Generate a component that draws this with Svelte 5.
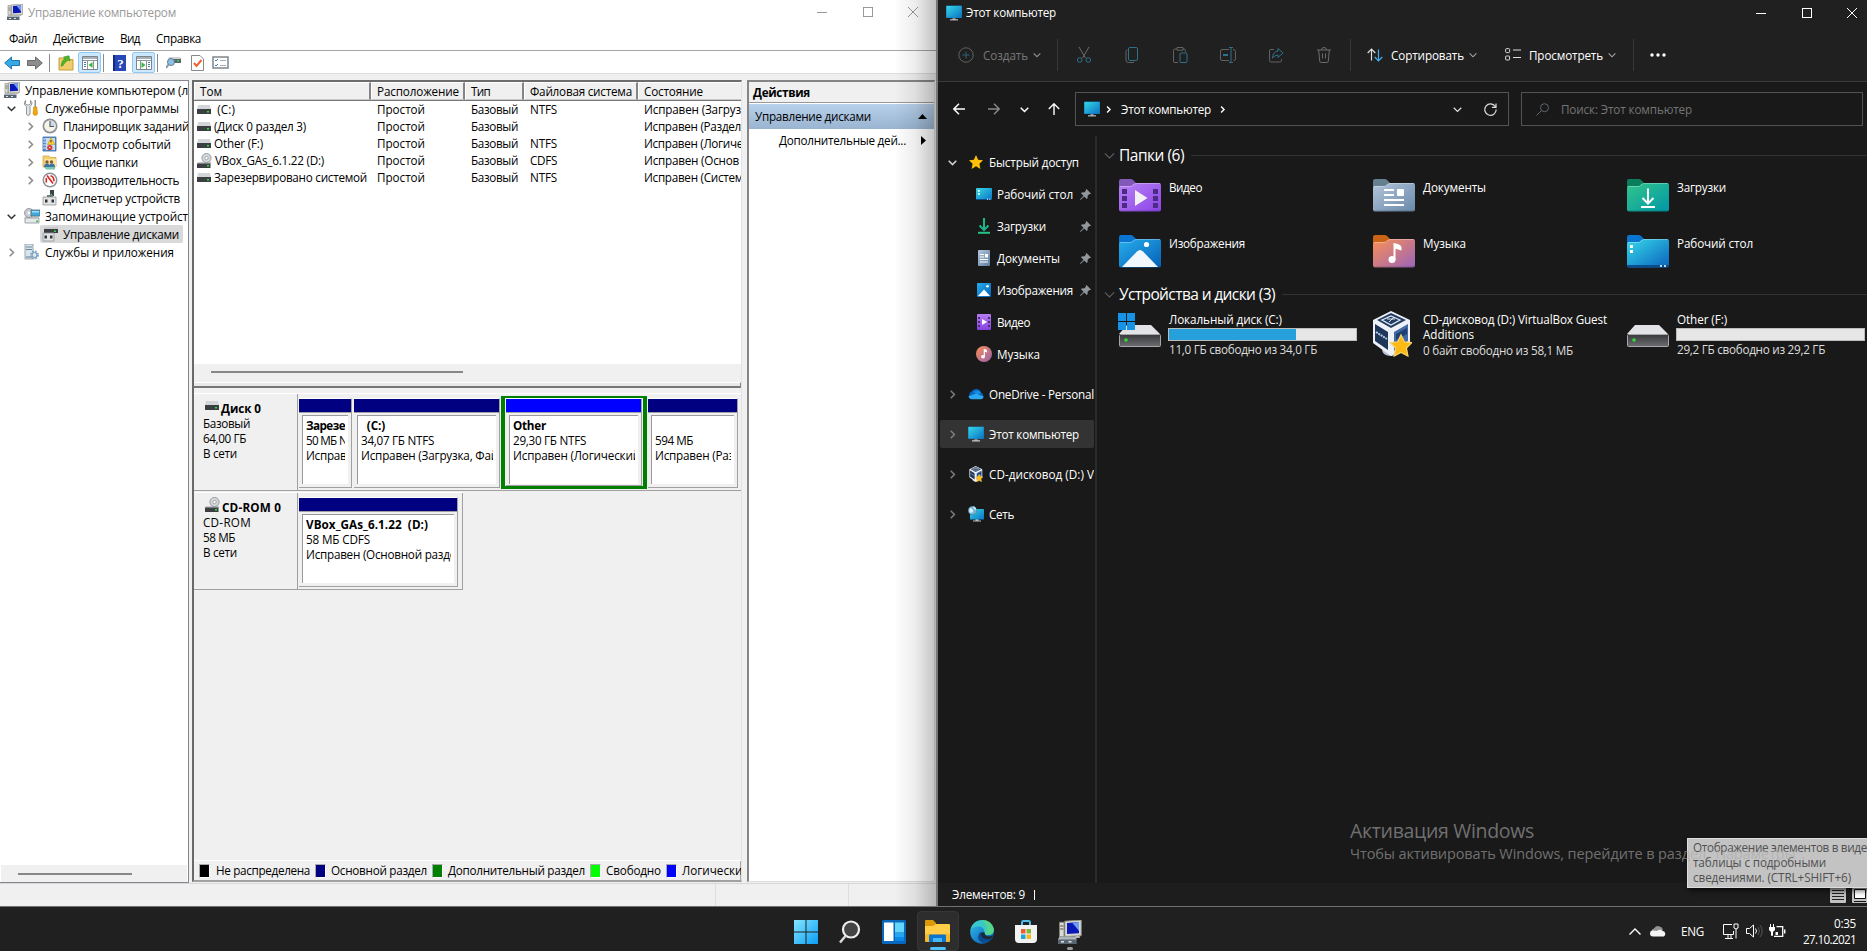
<script>
  // Spreads or tightens the letters so a label takes the given width.
  function fit(node, width) {
    if (!width) return;
    const natural = node.getBoundingClientRect().width;
    const count = [...node.textContent].length;
    node.style.letterSpacing = `${((width - natural) / count).toFixed(3)}px`;
  }

  const menu = [['Файл', 28], ['Действие', 51], ['Вид', 20], ['Справка', 45]];

  const tree = [
    { text: 'Управление компьютером (л', icon: 'mmc', lvl: 0, w: 163 },
    { text: 'Служебные программы', icon: 'tools', lvl: 1, arrow: 'down', w: 134 },
    { text: 'Планировщик заданий', icon: 'clock', lvl: 2, arrow: 'right', w: 126 },
    { text: 'Просмотр событий', icon: 'events', lvl: 2, arrow: 'right', w: 108 },
    { text: 'Общие папки', icon: 'shared', lvl: 2, arrow: 'right', w: 75 },
    { text: 'Производительность', icon: 'perf', lvl: 2, arrow: 'right', w: 116 },
    { text: 'Диспетчер устройств', icon: 'device', lvl: 2, w: 117 },
    { text: 'Запоминающие устройст', icon: 'storage', lvl: 1, arrow: 'down', w: 143 },
    { text: 'Управление дисками', icon: 'diskman', lvl: 2, sel: true, w: 116 },
    { text: 'Службы и приложения', icon: 'services', lvl: 1, arrow: 'right', w: 129 }
  ];

  const volumes = [
    ['\u00a0(C:)', 21, 'NTFS', 'Исправен (Загруз', 97],
    ['(Диск 0 раздел 3)', 92, '', 'Исправен (Раздел', 97],
    ['Other (F:)', 49, 'NTFS', 'Исправен (Логиче', 99],
    ['VBox_GAs_6.1.22 (D:)', 109, 'CDFS', 'Исправен (Основ', 95],
    ['Зарезервировано системой', 153, 'NTFS', 'Исправен (Систем', 99]
  ];

  const parts = [
    { w: 55, bar: 52, title: 'Зарезе', tw: 39, size: '50 МБ N', sw: 41, state: 'Исправен', stw: 54 },
    { w: 148, bar: 145, title: '\u00a0\u00a0(C:)', tw: 24, size: '34,07 ГБ NTFS', sw: 73, state: 'Исправен (Загрузка, Фай', stw: 137 },
    { w: 146, bar: 135, title: 'Other', tw: 33, size: '29,30 ГБ NTFS', sw: 73, state: 'Исправен (Логический', stw: 127, logical: true },
    { w: 92, bar: 89, title: '\u00a0', tw: 0, size: '594 МБ', sw: 38, state: 'Исправен (Раз', stw: 79 }
  ];

  const legend = [
    ['#000', 'Не распределена', 94],
    ['#000080', 'Основной раздел', 96],
    ['#008000', 'Дополнительный раздел', 137],
    ['#00ff00', 'Свободно', 55],
    ['#0000ff', 'Логический', 68]
  ];

  const quick = [
    ['desktop', 'Рабочий стол', 76, true],
    ['download', 'Загрузки', 49, true],
    ['docs', 'Документы', 63, true],
    ['pics', 'Изображения', 76, true],
    ['video', 'Видео', 33, false],
    ['music', 'Музыка', 43, false]
  ];

  const places = [
    ['onedrive', 'OneDrive - Personal', 105],
    ['pc', 'Этот компьютер', 90],
    ['vbox', 'CD-дисковод (D:) V', 105],
    ['net', 'Сеть', 25]
  ];

  const folders = [
    { kind: 'video', text: 'Видео', w: 33, tab: '#8259b8', a: '#b983f5', b: '#8b43e6' },
    { kind: 'docs', text: 'Документы', w: 63, tab: '#64808f', a: '#b4c6dc', b: '#6888a8' },
    { kind: 'download', text: 'Загрузки', w: 49, tab: '#0a7d5c', a: '#33c58a', b: '#0097a7' },
    { kind: 'pics', text: 'Изображения', w: 76, tab: '#0a74d1', a: '#27aeec', b: '#0660b8' },
    { kind: 'music', text: 'Музыка', w: 43, tab: '#c96414', a: '#fb8f55', b: '#9a64b8' },
    { kind: 'desktop', text: 'Рабочий стол', w: 76, tab: '#0a74d1', a: '#36d9ea', b: '#0a63bd' }
  ];
</script>

{#snippet t(text, w)}<span class="t" use:fit={w}>{text}</span>{/snippet}

{#snippet chev(dir, size, color, sw)}
  <svg class="chev" width={size} height={size} viewBox="0 0 10 10" fill="none" stroke={color} stroke-width={sw}>
    <path d={dir === 'down' ? 'M.8 3 5 7.2 9.2 3' : 'M3 .8 7.2 5 3 9.2'} />
  </svg>
{/snippet}

{#snippet disk()}
  <svg width="14" height="9" viewBox="0 0 14 9"><path d="M1 0h12l1 5H0z" fill="#d2d6d9" /><path d="M0 4h14v5H0z" fill="#3b3f42" /><path d="M10 6h2v1.5h-2z" fill="#28e03c" /></svg>
{/snippet}

{#snippet cd()}
  <svg width="15" height="15" viewBox="0 0 15 15"><path d="M1 9h13v2H0z" fill="#c2c6c9" /><circle cx="9.5" cy="5" r="4.6" fill="#d4d8da" stroke="#868b8e" stroke-width=".8" /><circle cx="9.5" cy="5" r="1.7" fill="#fff" stroke="#92979a" stroke-width=".8" /><path d="M0 10.5h13.5V15H0z" fill="#3b3f42" /><path d="M10 12h2v1.5h-2z" fill="#28e03c" /></svg>
{/snippet}

{#snippet mmcIcon(s)}
  <svg width={s} height={s} viewBox="0 0 16 16"><path d="M4.5 .8 15.500 0v10.500l-11 .5z" fill="#d9d8cf" stroke="#8b8b86" stroke-width=".6" /><path d="M6 2 14 1.400v7.400l-8 .5z" fill="#0b18b8" /><path d="m9.500 1.800 4.500-.4v6z" fill="#6d9cf5" /><path d="M1 1.500h3v9.500H1z" fill="#dcdcd6" stroke="#84847e" stroke-width=".6" /><path d="M1.500 4h2M1.500 6h2" stroke="#777" /><path d="M0 12.500h12.500V16H0z" fill="#596570" /><path d="M1 11h10.500l1 2H0z" fill="#aeb5b8" /><path d="M2 14h2v1H2zm5 0h2v1H7z" fill="#dbe5eb" /><path d="M11.500 10.500h3v1.500h-3z" fill="#babab5" /></svg>
{/snippet}

{#snippet treeIcon(kind)}
  {#if kind === 'mmc'}{@render mmcIcon(16)}
  {:else}
    <svg width="16" height="16" viewBox="0 0 16 16">
      {#if kind === 'tools'}
        <path d="M1.500 .5v3l1.500 1.500h2L6.500 3.500v-3Q9 2.500 7.500 5L6 6.500v8q-1.500 2-3.500 0v-8L.8 5Q-.5 2.500 1.500.5z" fill="#e4e7ea" stroke="#777d82" stroke-width=".8" /><path d="M10.500 0h1.500v7h-1.500z" fill="#8d9499" /><path d="M9.500 7h3.500v2l.6 5q-2.300 3-4.600 0l.5-5z" fill="#f2a60d" stroke="#c67d00" stroke-width=".5" />
      {:else if kind === 'clock'}
        <circle cx="8" cy="8" r="7.500" fill="#8b9297" /><circle cx="8" cy="8" r="5.800" fill="#f6f4e6" /><path d="M8 8V3a5 5 0 0 1 5 5z" fill="#c7d9ea" /><path d="M8 3v5.500h4" fill="none" stroke="#51585d" stroke-width="1.100" />
      {:else if kind === 'events'}
        <path d="M1 1h13v14H1z" fill="#5c8fd0" stroke="#34649e" stroke-width=".8" /><path d="M4 2h9v12H4z" fill="#c9dcf2" /><path d="M1 3h3M1 6h3M1 9h3M1 12h3" stroke="#e3eefa" /><path d="m9 1.500 4 7H5.500z" fill="#ffcd2e" stroke="#9c7810" stroke-width=".4" /><path d="M9 4v2.500" stroke="#333" /><circle cx="7.800" cy="11.500" r="2.600" fill="#d72d22" /><path d="m7 10.700 1.600 1.600m0-1.600L7 12.300" stroke="#fff" stroke-width=".8" />
      {:else if kind === 'shared'}
        <path d="M1 2h6l1 1.500h6V13H1z" fill="#f4cf6b" stroke="#caa33c" stroke-width=".7" /><path d="M3 5h11v8H3z" fill="#fbe39a" /><circle cx="5" cy="8" r="1.700" fill="#7a5a3c" /><circle cx="9.500" cy="8" r="1.700" fill="#7a5a3c" /><path d="M2 13q0-3.500 3-3.500T8 13zm5 0q0-3.500 3-3.500t3 3.500z" fill="#3f74a8" /><path d="M2 13h11v2.500H4z" fill="#7ac6b1" />
      {:else if kind === 'perf'}
        <circle cx="8" cy="8" r="7.500" fill="#8b9297" /><circle cx="8" cy="8" r="6" fill="#fff" /><path d="m5 3.500 6 8M4.300 6v4.500M8.500 3.800q3.500 1 3.500 5.500" stroke="#d8271f" stroke-width="1.600" fill="none" />
      {:else if kind === 'device'}
        <path d="M8 0h4v6H8z" fill="#3e4347" /><path d="M8.500 4h1.500v1.500H8.500z" fill="#2be342" /><path d="M5 5h6v3H5z" fill="#6d7276" /><path d="M1 7h13v8H1z" fill="#e2e4e5" stroke="#909598" stroke-width=".8" /><path d="M3 9.500h2.500v3H3zm6.500 0H12v3H9.500z" fill="#31363a" />
      {:else if kind === 'storage'}
        <path d="M1 8h14v3H0z" fill="#d5d9db" /><circle cx="5" cy="5" r="4.500" fill="#c6ccd0" stroke="#868d92" stroke-width=".8" /><circle cx="5" cy="5" r="1.400" fill="#fff" /><path d="M7 2h9v6H7z" fill="#3da9de" stroke="#5b6d78" stroke-width=".8" /><path d="M8 3h7v1.500H8z" fill="#9ddcf5" /><path d="M1 10h14v5H1z" fill="#e5e7e8" stroke="#8d9295" stroke-width=".8" /><path d="M12 12.500h2V14h-2z" fill="#2fc642" />
      {:else if kind === 'diskman'}
        <path d="M3 1h13v2H2z" fill="#c6cacd" /><path d="M2 3h14v4H2z" fill="#3a3e42" /><path d="M12 4.500h2V6h-2z" fill="#29df3e" /><path d="M1 7h11v8H1z" fill="#e0e2e3" stroke="#909598" stroke-width=".8" /><path d="M2.500 9.500H5v3H2.500zm5.500 0h2.500v3H8z" fill="#31363a" />
      {:else if kind === 'services'}
        <path d="M1 0h8v15H1z" fill="#d8e4ec" stroke="#84959f" stroke-width=".8" /><path d="M2 3h6M2 5.500h6" stroke="#6f8795" /><path d="M2 13h6" stroke="#5d788a" /><circle cx="10.500" cy="11" r="3.300" fill="none" stroke="#85a9c2" stroke-width="2.400" stroke-dasharray="1.700 .9" /><circle cx="10.500" cy="11" r="2.500" fill="#dbe9f2" stroke="#7297b1" />
      {/if}
    </svg>
  {/if}
{/snippet}

{#snippet pcIcon()}
  <svg width="16" height="16" viewBox="0 0 16 16"><path d="M6.500 13h3v2h-3z" fill="#878e93" /><path d="M4 14.300h8V15.400H4z" fill="#c5ccd0" /><rect y=".5" width="16" height="12.500" rx=".8" fill="#1678b8" /><rect x=".5" y="1" width="15" height="11.500" rx=".4" fill="url(#gPc)" /></svg>
{/snippet}

{#snippet vboxIcon(w, h)}
  <svg width={w} height={h} viewBox="0 0 40 46"><path d="M10 38q0 7 9 7t9-7z" fill="#b9bfd6" /><path d="M19 0 38 9v23L19 45 1 32V9z" fill="#eef2f8" /><path d="m19 2 15 7-15 8L5 9z" fill="#223c62" /><path d="m19 5 9 4-9 5-9-5z" fill="none" stroke="#dfe8f4" stroke-width="1.300" /><path d="M15 8h8M17 11l5-5" stroke="#dfe8f4" /><path d="m3 13 13 8v18L3 30z" fill="#1e3659" /><path d="m22 21 14-8v17l-14 10z" fill="#4169a5" /><path d="m24 23 11-6v6l-11 6z" fill="#1e3f72" /><path d="m4 21 11 7" stroke="#b7cce9" stroke-width="2" stroke-dasharray="2 .8" /><path d="m29 24 3.400 7 7.300.7-5.300 5.300 1.500 8L29 41.500 22.200 45l1.500-8-5.400-5.300 7.300-.7z" fill="#fdb913" stroke="#f7d56a" stroke-width="1.300" /></svg>
{/snippet}

{#snippet navIcon(kind)}
  {#if kind === 'pc'}{@render pcIcon()}
  {:else if kind === 'vbox'}{@render vboxIcon(15, 16)}
  {:else}
    <svg width="16" height="16" viewBox="0 0 16 16">
      {#if kind === 'desktop'}
        <rect y="2" width="16" height="12" rx="1" fill="url(#gPc)" /><path d="M2 4h1.800v1.800H2zm0 3h1.800v1.800H2z" fill="#fff" /><path d="M0 13h16v1H0z" fill="#0a4f8b" /><path d="M11 12.700h1v1h-1zm2.300 0h1v1h-1z" fill="#fff" />
      {:else if kind === 'download'}
        <path d="M8 0v12M3.500 7.500 8 12l4.500-4.500" fill="none" stroke="#1cb58a" stroke-width="2" /><path d="M2 13.800h12v2H2z" fill="#27bf84" />
      {:else if kind === 'docs'}
        <rect x="2" width="12" height="16" rx="1" fill="url(#gDoc)" /><path d="M4 4.500h4M4 7h4M4 9.500h8M4 12h8" stroke="#fff" stroke-width="1.200" /><path d="M9 4h3v3.500H9z" fill="#fff" />
      {:else if kind === 'pics'}
        <rect x="1" y="1" width="14" height="14" rx="1" fill="url(#gPic)" /><path d="m2 14 6-6.500L14 14z" fill="#fff" /><circle cx="11.500" cy="4.300" r="1.300" fill="#fff" />
      {:else if kind === 'video'}
        <rect x="1" width="14" height="16" rx="1" fill="url(#gVid)" /><path d="M2 3h2v2H2zm0 4h2v2H2zm0 4h2v2H2zm10-8h2v2h-2zm0 4h2v2h-2zm0 4h2v2h-2z" fill="#472e79" /><path d="m6 5 5 3-5 3z" fill="#fff" />
      {:else if kind === 'music'}
        <circle cx="8" cy="8" r="8" fill="url(#gMus)" /><path d="M8.300 3v7" stroke="#fff" stroke-width="1.200" /><path d="M8 3q3 .2 3 2v1.500L8 5.500z" fill="#fff" /><ellipse cx="7" cy="10.800" rx="2" ry="1.800" fill="#fff" />
      {:else if kind === 'onedrive'}
        <path d="M4 13a4 4 0 0 1-.5-7.500A5.300 5.300 0 0 1 13 6.500 3.500 3.500 0 0 1 13 13z" fill="#0765c1" /><path d="M5.500 6A5.200 5.200 0 0 1 13 6.500L10 9z" fill="#1590df" /><path d="M3 13.200q-2.600-.8-2.500-3L8 7.500l7.700 3Q15.500 13 13 13.200z" fill="#2aa7ee" />
      {:else if kind === 'net'}
        <path d="M7.500 13h3v2h-3zM5 14.500h8v1H5z" fill="#b6bec3" /><rect x="2" y="3" width="14" height="10.500" rx=".6" fill="url(#gPc)" /><circle cx="4.500" cy="4.500" r="4.300" fill="#75b5d6" stroke="#3c7190" stroke-width=".5" /><path d="M2 2q2 0 3 2T3 7Q0 6 2 2m3-2q3 1 3 4L6 3z" fill="#d9eef7" />
      {/if}
    </svg>
  {/if}
{/snippet}

{#snippet folder(f, i)}
  <svg width="42" height="34" viewBox="0 0 42 34">
    <defs><linearGradient id="f{i}" x1="0" y1="0" x2="1" y2="1"><stop offset="0" stop-color={f.a} /><stop offset="1" stop-color={f.b} /></linearGradient></defs>
    <path d="M0 2q0-2 2-2h10q2 0 3.500 2.500L18 5v5H0z" fill={f.tab} />
    <path d="M0 9q0-2 2-2h9q2 0 3-1.500Q15.500 4 17.500 4H40q2 0 2 2v24.500q0 2-2 2H2q-2 0-2-2z" fill="url(#f{i})" />
    <path d="M1 7.500h10q2 0 3-1.500Q15.500 4.500 17.500 4.500H41" stroke="#fff" opacity=".3" fill="none" />
    <path d="M.5 32h41" stroke="#000" opacity=".22" />
    {#if f.kind === 'video'}
      <path d="M3 10h5v5H3zm0 7h5v5H3zm0 7h5v5H3zm31-14h5v5h-5zm0 7h5v5h-5zm0 7h5v5h-5z" fill="#4b2b83" /><path d="m16 11 12.500 8L16 27z" fill="#f3f0f6" />
    {:else if f.kind === 'docs'}
      <path d="M11 11h10M11 16h10M11 21h20M11 26h20" stroke="#fff" stroke-width="2" /><rect x="24" y="10" width="7" height="7" rx="1" fill="#fff" />
    {:else if f.kind === 'download'}
      <path d="M21 9.500v15M15.500 19l5.500 5.500 5.500-5.500M14 28h14" stroke="#fff" stroke-width="2" fill="none" />
    {:else if f.kind === 'pics'}
      <path d="M3 32 18 16.500q3-3 6 0L39 32z" fill="#f0f7fd" /><circle cx="27.500" cy="9.500" r="2.600" fill="#fff" />
    {:else if f.kind === 'music'}
      <path d="M21.500 9v16" stroke="#fff" stroke-width="2" /><path d="M20.500 8q8 1 8 4.500v3l-7-2z" fill="#fff" /><circle cx="19" cy="24.500" r="3.500" fill="#fff" />
    {:else}
      <path d="M3 10h3v3H3zm0 5h3v3H3z" fill="#fff" /><path d="M0 30h42v.5q0 2-2 2H2q-2 0-2-2z" fill="#0b4c8e" /><path d="M33 30h2v2h-2zm4 0h2v2h-2z" fill="#b7daf2" />
    {/if}
  </svg>
{/snippet}

{#snippet drive(win)}
  <svg width="43" height="36" viewBox="0 0 43 36"><path d="M9 12h24l9 9H1z" fill="#e1e3e6" /><rect x="1.500" y="21.500" width="41" height="12" rx="1" fill="url(#gDrv)" stroke="#a5a7aa" /><circle cx="8" cy="27" r="1.800" fill="#2bdd35" />
    {#if win}<path d="M0 0h8v8H0zm9 0h8v8H9zM0 9h8v8H0zm9 0h8v8H9z" fill="#1593e6" />{/if}
  </svg>
{/snippet}

{#snippet partition(p)}
  <div class="part" class:logical={p.logical} style:width="{p.w}px">
    <div class="frame">
      <div class="bar" style:width="{p.bar}px"></div>
      <div class="body">
        <div class="clip">
          <b>{@render t(p.title, p.tw)}</b>
          <div>{@render t(p.size, p.sw)}</div>
          <div>{@render t(p.state, p.stw)}</div>
        </div>
      </div>
    </div>
  </div>
{/snippet}

<svg class="defs" width="0" height="0">
  <defs>
    <linearGradient id="gPc" x1="0" y1="0" x2="1" y2="1"><stop offset="0" stop-color="#35d8e6" /><stop offset="1" stop-color="#0b73c5" /></linearGradient>
    <linearGradient id="gDoc" x1="0" y1="0" x2="1" y2="1"><stop offset="0" stop-color="#b4c6dc" /><stop offset="1" stop-color="#5c7d9f" /></linearGradient>
    <linearGradient id="gPic" x1="0" y1="0" x2="1" y2="1"><stop offset="0" stop-color="#27aeec" /><stop offset="1" stop-color="#0660b8" /></linearGradient>
    <linearGradient id="gVid" x1="0" y1="0" x2="0" y2="1"><stop offset="0" stop-color="#b77cf0" /><stop offset="1" stop-color="#8641e0" /></linearGradient>
    <linearGradient id="gMus" x1="0" y1="0" x2="1" y2="1"><stop offset="0" stop-color="#fb8f55" /><stop offset="1" stop-color="#9a5fae" /></linearGradient>
    <linearGradient id="gDrv" x1="0" y1="0" x2="0" y2="1"><stop offset="0" stop-color="#37393b" /><stop offset="1" stop-color="#6b6d70" /></linearGradient>
    <linearGradient id="gWin" x1="0" y1="0" x2="1" y2="1"><stop offset="0" stop-color="#84e6ff" /><stop offset="1" stop-color="#0a9df5" /></linearGradient>
    <linearGradient id="gEdge" x1="0" y1="0" x2="1" y2="1"><stop offset="0" stop-color="#33c6e5" /><stop offset=".5" stop-color="#1b87cf" /><stop offset="1" stop-color="#0c4f9e" /></linearGradient>
  </defs>
</svg>

<div class="desktop">
  <section class="mmc">
    <header class="title">
      {@render mmcIcon(16)}
      <span class="caption">{@render t('Управление компьютером', 148)}</span>
      <div class="winbtns">
        <svg width="10" height="10"><path d="M0 5.500h10" stroke="#999" /></svg>
        <svg width="10" height="10"><rect x=".5" y=".5" width="9" height="9" fill="none" stroke="#999" /></svg>
        <svg width="10" height="10"><path d="m0 0 10 10M10 0 0 10" stroke="#999" /></svg>
      </div>
    </header>
    <nav class="menu">
      {#each menu as [text, w]}{@render t(text, w)}{/each}
    </nav>
    <div class="tools">
      <svg class="arrow" width="16" height="14" viewBox="0 0 16 14"><path d="M.7 7 7.500 1v3.500h8v5h-8V13z" fill="#36a9e6" stroke="#2373ad" /></svg>
      <svg class="arrow" width="16" height="14" viewBox="0 0 16 14"><path d="M15.300 7 8.500 1v3.500h-8v5h8V13z" fill="#8d8d8d" stroke="#696969" /></svg>
      <i></i>
      <svg width="16" height="16" viewBox="0 0 16 16"><path d="M1 3h5l1.500 1.500H15V15H1z" fill="#f1cc6a" stroke="#c59e3d" /><path d="M3 11q1-6 4-7.500L5.500 2 11 .8 12 6l-2-1Q7 7 4.500 11z" fill="#4db82c" stroke="#328a1d" stroke-width=".6" /></svg>
      <div class="on"><svg width="16" height="14" viewBox="0 0 16 14"><path d="M.5.5h15v13H.5z" fill="#fff" stroke="#7b848a" /><path d="M1 1h14v2H1z" fill="#a7b0b5" /><path d="M5.500 5v8M11.500 5v8M1 4.500h14" stroke="#8b9499" /><path d="M2 6.500h2m-2 2h2m-2 2h2" stroke="#487dae" /><path d="m10.500 6-4 3 4 3z" fill="#38b83c" /></svg></div>
      <i class="i2"></i>
      <svg class="help" width="13" height="16" viewBox="0 0 13 16"><path d="M0 0h13v16H0z" fill="#2847b8" /><path d="M0 0h2v16H0z" fill="#172b82" /><text x="7.500" y="13" text-anchor="middle">?</text></svg>
      <div class="on"><svg width="16" height="14" viewBox="0 0 16 14"><path d="M.5.5h15v13H.5z" fill="#fff" stroke="#7b848a" /><path d="M1 1h14v2H1z" fill="#a7b0b5" /><path d="M4.500 5v8M10.500 5v8M1 4.500h14" stroke="#8b9499" /><path d="M12 6.500h2m-2 2h2m-2 2h2" stroke="#487dae" /><path d="m5.500 6 4 3-4 3z" fill="#38b83c" /></svg></div>
      <i class="i3"></i>
      <svg class="g1" width="16" height="13" viewBox="0 0 16 13"><path d="M3 2h12v5H3z" fill="#5c656a" /><path d="M3 1h11l1 2H2z" fill="#ced4d7" /><path d="M11 4h2v1.500h-2z" fill="#2bdf40" /><circle cx="5" cy="6" r="3.500" fill="#8ac3e7" stroke="#607c8e" /><path d="m3 8-3 4" stroke="#8c949a" stroke-width="2" /></svg>
      <svg class="g2" width="13" height="16" viewBox="0 0 13 16"><path d="M.5.500h8.500l3.500 3.500v11.500H.500z" fill="#fff" stroke="#858a8d" /><path d="m3 8 2.500 3 5-6" fill="none" stroke="#ed6231" stroke-width="2" /></svg>
      <svg class="g3" width="17" height="13" viewBox="0 0 17 13"><path d="M1 1h15v11H1z" fill="#fff" stroke="#80878c" stroke-width="1.500" /><path d="m3 4 1 1 2-2M3 9l1 1 2-2" fill="none" stroke="#3c7fb8" /><path d="M8 4.500h6M8 9.500h6" stroke="#a2adb4" /></svg>
    </div>

    <div class="panes">
      <aside class="tree">
        <div class="nodes">
          {#each tree as n}
            <div class="node l{n.lvl}">
              {#if n.lvl}<span class="tw">{#if n.arrow}{@render chev(n.arrow, 9, n.arrow === 'down' ? '#333' : '#8a8a8a', 1.7)}{/if}</span>{/if}
              <div class="lab" class:sel={n.sel}>{@render treeIcon(n.icon)}{@render t(n.text, n.w)}</div>
            </div>
          {/each}
        </div>
        <div class="hs"><span></span></div>
      </aside>

      <main class="mid">
        <div class="cols head">
          <div>{@render t('Том', 22)}</div><div>{@render t('Расположение', 82)}</div><div>{@render t('Тип', 19)}</div><div>{@render t('Файловая система', 102)}</div><div>{@render t('Состояние', 59)}</div>
        </div>
        <div class="rows">
          {#each volumes as v, i}
            <div class="cols">
              <div class="vol">{#if i === 3}{@render cd()}{:else}{@render disk()}{/if}{@render t(v[0], v[1])}</div>
              <div>{@render t('Простой', 48)}</div><div>{@render t('Базовый', 47)}</div><div>{@render t(v[2], v[2] ? 27 : 0)}</div><div>{@render t(v[3], v[4])}</div>
            </div>
          {/each}
        </div>
        <div class="hs2"><span></span></div>
        <div class="split"></div>
        <div class="graph">
          <div class="drow">
            <div class="dinfo"><b>{@render disk()}{@render t('Диск 0', 40)}</b><div>{@render t('Базовый', 47)}</div><div>{@render t('64,00 ГБ', 43)}</div><div>{@render t('В сети', 34)}</div></div>
            <div class="dparts">{#each parts as p}{@render partition(p)}{/each}</div>
          </div>
          <div class="drow cdrow">
            <div class="dinfo"><b>{@render cd()}{@render t('CD-ROM 0', 59)}</b><div>{@render t('CD-ROM', 48)}</div><div>{@render t('58 МБ', 32)}</div><div>{@render t('В сети', 34)}</div></div>
            <div class="dparts">{@render partition({ w: 161, bar: 158, title: 'VBox_GAs_6.1.22\u00a0\u00a0(D:)', tw: 122, size: '58 МБ CDFS', sw: 64, state: 'Исправен (Основной разде', stw: 150 })}</div>
          </div>
        </div>
        <div class="legend">
          {#each legend as [c, text, w]}<span class="sw" style:background={c}></span>{@render t(text, w)}{/each}
        </div>
      </main>

      <aside class="actions">
        <h2>{@render t('Действия', 57)}</h2>
        <div class="grp">{@render t('Управление дисками', 116)}<svg width="9" height="5"><path d="M0 5 4.500 0 9 5z" /></svg></div>
        <div class="more">{@render t('Дополнительные дей...', 127)}<svg width="5" height="9"><path d="m0 0 5 4.500L0 9z" /></svg></div>
      </aside>
    </div>
    <footer><span></span><span></span></footer>
    <div class="shade"></div>
  </section>

  <section class="exp">
    <header class="etitle">
      {@render pcIcon()}{@render t('Этот компьютер', 90)}
      <div class="winbtns">
        <svg width="10" height="10"><path d="M0 5.500h10" stroke="#fff" /></svg>
        <svg width="10" height="10"><rect x=".5" y=".5" width="9" height="9" fill="none" stroke="#fff" /></svg>
        <svg width="10" height="10"><path d="m0 0 10 10M10 0 0 10" stroke="#fff" /></svg>
      </div>
    </header>
    <div class="cmd">
      <div class="new">
        <svg width="16" height="16" viewBox="0 0 16 16" fill="none"><circle cx="8" cy="8" r="7.200" stroke="#626262" /><path d="M8 4.500v7M4.500 8h7" stroke="#29637b" /></svg>
        {@render t('Создать', 45)}{@render chev('down', 8, '#8b8b8b', 1.5)}
      </div>
      <i></i>
      <div class="ops">
        <svg width="16" height="16" viewBox="0 0 16 16" fill="none" stroke="#6c6c6c"><path d="m3 0 6.500 11M13 0 6.500 11" /><circle cx="3.700" cy="13" r="2.300" stroke="#2f718c" /><circle cx="12.300" cy="13" r="2.300" stroke="#2f718c" /></svg>
        <svg width="16" height="16" viewBox="0 0 16 16" fill="none" stroke="#626262"><path d="M3.500 3Q2 3 2 4.500V13q0 2.500 2.500 2.500H10" /><rect x="4.500" y=".5" width="9" height="13" rx="1.500" stroke="#2f718c" /></svg>
        <svg width="16" height="16" viewBox="0 0 16 16" fill="none" stroke="#626262"><path d="M6 15.500H3Q1.500 15.500 1.500 14V3.500Q1.500 2 3 2h2m6 0h1q1.500 0 1.500 1.500V5M5 .5h6v2.700H5z" /><rect x="8" y="6" width="7" height="9.500" rx="1" stroke="#2f718c" /></svg>
        <svg width="16" height="16" viewBox="0 0 16 16" fill="none" stroke="#626262"><path d="M9 2.500H2Q.5 2.500.5 4v8q0 1.500 1.500 1.500h7m4-11q2.500 0 2.500 2V12q0 1.500-2 1.500" /><path d="M9 .5h4m-2 0v15m-2 0h4" stroke="#2f718c" /><path d="M3 8h5" stroke="#2f718c" stroke-width="2" /></svg>
        <svg width="16" height="16" viewBox="0 0 16 16" fill="none" stroke="#626262"><path d="M6 2.500H3Q1.500 2.500 1.500 4v9.500Q1.500 15 3 15h9q1.500 0 1.500-1.500V12" /><path d="M10 1.500 15 6l-5 4.500V8q-3 0-5.500 3Q5 4.500 10 4z" stroke="#2f718c" /></svg>
        <svg width="16" height="16" viewBox="0 0 16 16" fill="none" stroke="#6c6c6c"><path d="M1 3h14M5.500 3q0-2.500 2.500-2.500T10.500 3M2.700 3l1 11q.2 1.500 1.500 1.500h5.600q1.300 0 1.500-1.500l1-11M6.500 6.500v5m3-5v5" /></svg>
      </div>
      <i></i>
      <div class="sort">
        <svg width="16" height="14" viewBox="0 0 16 14" fill="none"><path d="M4.500 12.500V1M.7 5l3.800-4 3.800 4" stroke="#ddd" stroke-width="1.200" /><path d="M11.500 1.500V13M7.700 9l3.800 4 3.800-4" stroke="#45aef0" stroke-width="1.200" /></svg>
        {@render t('Сортировать', 73)}{@render chev('down', 8, '#aaa', 1.3)}
      </div>
      <div class="view">
        <svg width="16" height="13" viewBox="0 0 16 13" fill="none" stroke="#ddd"><rect x=".6" y=".6" width="4" height="4" rx="1" /><rect x=".6" y="8" width="4" height="4" rx="1" /><path d="M8 2h8M8 9.500h8" /></svg>
        {@render t('Просмотреть', 74)}{@render chev('down', 8, '#aaa', 1.3)}
      </div>
      <i></i>
      <svg class="dots" width="16" height="4"><circle cx="2" cy="2" r="1.700" /><circle cx="8" cy="2" r="1.700" /><circle cx="14" cy="2" r="1.700" /></svg>
    </div>
    <div class="addr">
      <div class="nav4">
        <svg width="12" height="12" viewBox="0 0 12 12"><path d="M12 6H1M6 .8.8 6 6 11.200" fill="none" stroke="#fff" stroke-width="1.400" /></svg>
        <svg class="fwd" width="12" height="12" viewBox="0 0 12 12"><path d="M0 6h11M6 .8 11.200 6 6 11.200" fill="none" stroke="#8a8a8a" stroke-width="1.400" /></svg>
        {@render chev('down', 9, '#fff', 1.7)}
        <svg class="upd" width="12" height="12" viewBox="0 0 12 12"><path d="M6 12V1M.8 6 6 .8 11.200 6" fill="none" stroke="#fff" stroke-width="1.400" /></svg>
      </div>
      <div class="path">
        {@render pcIcon()}{@render chev('right', 7, '#fff', 2)}{@render t('Этот компьютер', 90)}{@render chev('right', 7, '#fff', 2)}
        <div class="pend">
          {@render chev('down', 9, '#ddd', 1.4)}
          <svg width="13" height="13" viewBox="0 0 13 13"><path d="M11.300 3.500A5.700 5.700 0 1 0 12.200 6.500M12 .5v3.800H8" fill="none" stroke="#ddd" stroke-width="1.200" /></svg>
        </div>
      </div>
      <div class="search">
        <svg width="13" height="13" viewBox="0 0 13 13"><path d="m.5 12.500 5-5" stroke="#5e6b5e" /><circle cx="8.500" cy="4.700" r="4" fill="none" stroke="#5e6670" /></svg>
        {@render t('Поиск: Этот компьютер', 131)}
      </div>
    </div>
    <div class="ebody">
      <aside class="side">
        <div class="top">
          {@render chev('down', 9, '#ccc', 1.8)}
          <svg width="14" height="14" viewBox="0 0 14 14"><path d="m7 0 2.100 4.700 4.900.6-3.600 3.400 1 5.300L7 11.300 2.600 14l1-5.300L0 5.300l4.900-.6z" fill="#ffc107" /></svg>
          {@render t('Быстрый доступ', 90)}
        </div>
        {#each quick as [icon, text, w, pin]}
          <div class="q">{@render navIcon(icon)}{@render t(text, w)}
            {#if pin}<svg class="pin" width="11" height="11" viewBox="0 0 11 11"><path d="m6.500 0 4.500 4.500-1 .8-.7-.2L7.500 7 7.700 9l-1 1L4.200 7.500.5 11 0 10.500l3.500-3.700L1 4.300l1-1L4 3.500 6 1.700 5.700.8z" fill="#8f979d" /></svg>{/if}
          </div>
        {/each}
        {#each places as [icon, text, w]}
          <div class="p" class:cur={icon === 'pc'}>{@render chev('right', 9, '#818181', 1.6)}{@render navIcon(icon)}{@render t(text, w)}</div>
        {/each}
      </aside>
      <div class="content">
        <h3>{@render chev('down', 11, '#5f5f5f', 1)}{@render t('Папки (6)', 65)}<hr /></h3>
        <div class="grid">
          {#each folders as f, i}<div class="tile">{@render folder(f, i)}{@render t(f.text, f.w)}</div>{/each}
        </div>
        <h3 class="h2nd">{@render chev('down', 11, '#5f5f5f', 1)}{@render t('Устройства и диски (3)', 156)}<hr /></h3>
        <div class="grid devs">
          <div class="dev"><div class="ic">{@render drive(true)}</div><div class="info">{@render t('Локальный диск (C:)', 113)}<div class="meter"><span style:width="68%"></span></div><small>{@render t('11,0 ГБ свободно из 34,0 ГБ', 148)}</small></div></div>
          <div class="dev"><div class="ic">{@render vboxIcon(40, 46)}</div><div class="info">{@render t('CD-дисковод (D:) VirtualBox Guest', 184)}<br />{@render t('Additions', 51)}<small>{@render t('0 байт свободно из 58,1 МБ', 150)}</small></div></div>
          <div class="dev"><div class="ic">{@render drive(false)}</div><div class="info">{@render t('Other (F:)', 50)}<div class="meter"></div><small>{@render t('29,2 ГБ свободно из 29,2 ГБ', 148)}</small></div></div>
        </div>
      </div>
    </div>
    <footer class="estat">{@render t('Элементов: 9', 73)}<i></i>
      <div class="modes">
        <svg width="16" height="16"><rect width="16" height="16" rx="1" fill="#c1c1c1" /><path d="M2 3.500h12M2 6.500h12M2 9.500h12M2 12.500h12" stroke="#222" /></svg>
        <svg width="16" height="16"><rect width="16" height="16" rx="1" fill="#c1c1c1" /><path d="M2.500 2.500h11v9h-11z" fill="#fff" stroke="#111" /><path d="M2 14.500h12" stroke="#111" /></svg>
      </div>
    </footer>
  </section>

  <div class="tip"><div>{@render t('Отображение элементов в виде', 174)}</div><div>{@render t('таблицы с подробными', 133)}</div><div>{@render t('сведениями. (CTRL+SHIFT+6)', 158)}</div></div>
  <div class="wm"><div class="w1">{@render t('Активация Windows', 184)}</div><div class="w2">{@render t('Чтобы активировать Windows, перейдите в раздел "Параметры".', 455)}</div></div>

  <div class="taskbar">
    <div class="apps">
      <div class="app"><svg width="24" height="24"><path d="M0 0h11.500v11.500H0zm12.500 0H24v11.500H12.500zM0 12.500h11.500V24H0zm12.500 0H24V24H12.500z" fill="url(#gWin)" /></svg></div>
      <div class="app"><svg width="24" height="24"><circle cx="13" cy="9.500" r="8" fill="#454545" stroke="#eee" stroke-width="2.200" /><path d="m7.500 16-5.500 6.500" stroke="#d8d8d8" stroke-width="2.500" /></svg></div>
      <div class="app"><svg width="24" height="24"><rect width="24" height="24" rx="1.500" fill="#0868bd" /><path d="M2 2.500h9.500v18.500H2z" fill="#fff" /><path d="M13 2.500h9v10h-9z" fill="#64d6fb" /><path d="M13 13h9v4h-9z" fill="#25a7f0" /><path d="M13 17h9v4h-9z" fill="#0b87e8" /></svg></div>
      <div class="app active"><svg width="26" height="24" viewBox="0 0 26 24"><path d="M0 1q0-1 1-1h7l3 3v4H0z" fill="#dc9a08" /><path d="M0 6h8l3-2h13q1 0 1 1v14H0z" fill="#ffcd47" /><path d="M0 14h25v7q0 1-1 1H1q-1 0-1-1z" fill="#f6b82b" /><path d="M4 15.500q0-1 1-1h15q1 0 1 1V22H4z" fill="#0b74cf" /><path d="M8 18h9v4H8z" fill="#46b7f5" /></svg><u></u></div>
      <div class="app"><svg width="24" height="24" viewBox="0 0 24 24"><circle cx="12" cy="12" r="11.800" fill="url(#gEdge)" /><path d="M.5 10Q3 0 12 0t12 9q0 6-6 6-4 0-3.500-2.500Q14 7 9 6.500 3 6 .5 10z" fill="#39c8c9" /><path d="M12 0q10 0 12 9 0 6-6 6-3 0-3.500-2Q20 7 12 0z" fill="#62dc70" opacity=".65" /><path d="M14.500 12.500Q14 15.500 18 16.500q3 .5 5-.8Q20 23 13 23 6 20 9 14q1-3 5.500-1.500z" fill="#0a4b92" /><path d="M14.500 12.500Q14.500 16 18 16.200q4 .2 5-1-1 4-5 4-7-.2-7-5 0-1.700 3.500-1.700z" fill="#202020" opacity=".8" /></svg></div>
      <div class="app"><svg width="24" height="24" viewBox="0 0 24 24"><path d="M8 6V2.500Q8 1 9.500 1h5Q16 1 16 2.500V6" stroke="#50bdec" stroke-width="2" fill="none" /><path d="M1 5h22v14q0 4-4 4H5q-4 0-4-4z" fill="#f2f2f2" /><path d="M7 9h4.500v4.500H7z" fill="#ef5b35" /><path d="M12.500 9H17v4.500h-4.500z" fill="#80b83c" /><path d="M7 14.500h4.500V19H7z" fill="#1ba5dd" /><path d="M12.500 14.500H17V19h-4.500z" fill="#f7b71f" /></svg></div>
      <div class="app">{@render mmcIcon(24)}<u class="dim"></u></div>
    </div>
    <div class="tray">
      <svg class="up" width="12" height="7"><path d="m.5 6.500 5.500-5.500 5.500 5.500" fill="none" stroke="#fff" stroke-width="1.400" /></svg>
      <svg class="cloud" width="17" height="12" viewBox="0 0 17 12"><path d="M3 10a3.500 3.500 0 0 1 1-6.500 5 5 0 0 1 9 1z" fill="#929292" /><path d="M3 11.500a3 3 0 0 1 0-6l4 .500q2.500-2.500 6 0a3 3 0 0 1 .8 5.500z" fill="#f3f3f3" /></svg>
      {@render t('ENG', 23)}
      <svg class="n" width="17" height="16" viewBox="0 0 17 16" fill="none" stroke="#fff"><path d="M10 1.500H1.500v10h10V8M3 15.500h8m-5-4v3.500m3-3.500v3.500" /><path d="M12 1h4v4l-2 1-2-1zm2 5v9.500" /></svg>
      <svg class="v" width="17" height="14" viewBox="0 0 17 14" fill="none" stroke="#fff"><path d="M.5 4.500h3L7.500 1v12l-4-3.500h-3z" /><path d="M9.500 4.500q2 2.500 0 5" /><path d="M12 3q3 4 0 8m2-10q4.500 6 0 12" stroke="#555" /></svg>
      <svg class="b" width="17" height="14" viewBox="0 0 17 14" fill="none" stroke="#fff"><path d="M1.500 0v3m3-3v3" /><path d="M0 3h6v2.500q-.5 2-2 2.300v4H2v-4Q.5 7.500 0 5.500z" fill="#fff" stroke="none" /><path d="M7.500 2.700h6.200v9.600H5" stroke-width="1.300" /><path d="M15.700 5.500v4" stroke-width="1.500" /><path d="M6.500 8h2.500v3H6.500z" fill="#fff" stroke="none" /></svg>
      <div class="time"><div>{@render t('0:35', 22)}</div><div>{@render t('27.10.2021', 53)}</div></div>
    </div>
  </div>
</div>

<style>
  :global(body) { margin: 0; background: #202020; overflow: hidden; }
  .desktop { position: relative; width: 1867px; height: 951px; overflow: hidden; font: 11.7px/15px "Open Sans", "Noto Sans", sans-serif; color: #000; }
  .desktop :global(*) { box-sizing: border-box; }
  .defs { position: absolute; }
  svg { flex: none; display: block; }
  .t { white-space: pre; flex: none; display: inline-block; }
  b, h2 { font-weight: 700; }

  .mmc { position: absolute; left: 0; top: 0; width: 938px; height: 907px; background: #f0f0f0; border-right: 2px solid #777; border-bottom: 1px solid #717171; display: flex; flex-direction: column; overflow: hidden; }
  .title { height: 26px; background: #fff; display: flex; align-items: center; padding: 0 18px 2px 7px; gap: 5px; }
  .caption { color: #999; }
  .winbtns { margin-left: auto; display: flex; gap: 35.500px; }
  .menu { height: 24px; background: #fff; display: flex; gap: 16px; padding: 5px 9px 0; }
  .tools { height: 24px; background: #fff; border-top: 1px solid #a5a5a5; border-bottom: 1px solid #ddd; display: flex; align-items: center; padding: 1px 0 0 4px; }
  .tools .arrow { margin-right: 7px; }
  .tools i { width: 1px; height: 18px; background: #8b8b8b; margin: 0 8px 0 -1px; }
  .on { width: 23px; height: 21px; margin-left: 4px; background: #cce8ff; border: 1px solid #90c8f6; border-radius: 2px; display: flex; justify-content: center; align-items: center; }
  .tools .i2 { margin: 0 9px 0 2px; }
  .help { margin-right: 2px; }
  .help text { font: bold 13px "Liberation Serif", serif; fill: #fff; }
  .tools .i3 { margin: 0 8px 0 2px; }
  .g2 { margin-left: 9px; }
  .g3 { margin-left: 8px; }
  .panes { height: 809px; padding-top: 6px; display: flex; }
  .tree { width: 189px; background: #fff; border: 1px solid #828790; border-left: 0; overflow: hidden; display: flex; flex-direction: column; }
  .nodes { flex: 1; }
  .node { height: 18px; display: flex; align-items: center; }
  .lab { flex: none; display: flex; align-items: center; gap: 5px; height: 18px; padding: 0 4px 0 2px; border-radius: 2px; }
  .l0 { padding-left: 2px; }
  .l1 .lab { gap: 5px; }
  .tw { flex: none; width: 16px; display: flex; justify-content: flex-end; margin-right: 6px; }
  .l2 .tw { width: 35px; margin-right: 5px; }
  .sel { background: #d9d9d9; }
  .hs { height: 17px; background: #f0f0f0; margin: 0 1px; padding: 8px 0 0 17px; }
  .hs span, .hs2 span { display: block; width: 114px; height: 2px; background: #888; }
  .mid { width: 550px; margin: 0 5px 1px 3px; border: 2px solid #696969; border-top-color: #6d6d6d; border-right: 1px solid #e3e3e3; border-bottom: 2px solid #a0a0a0; overflow: hidden; display: flex; flex-direction: column; }
  .cols { display: grid; grid-template-columns: 177px 94px 59px 114px 107px; height: 17px; align-items: center; }
  .cols > div { padding-left: 6px; white-space: nowrap; }
  .head { height: 19px; background: #f0f0f0; border-bottom: 1px solid #777; }
  .head > div { height: 18px; padding-top: 1px; border: 1px solid #fff; border-right: 2px solid #858585; border-bottom-color: #c9c9c9; padding-left: 5px; }
  .rows { height: 263px; background: #fff; }
  .cols > .vol { display: flex; align-items: center; gap: 3px; padding-left: 3px; height: 17px; }
  .hs2 { height: 18px; background: #f0f0f0; padding: 7px 0 0 17px; }
  .hs2 span { width: 252px; }
  .split { height: 6px; border-top: 1px solid #fff; border-bottom: 2px solid #777; border-right: 1px solid #888; background: #e8e8e8; }
  .graph { flex: 1; padding-top: 5px; background: #f0f0f0; }
  .drow { display: flex; height: 98px; border-bottom: 1px solid #a0a0a0; border-top: 1px solid #fff; }
  .dinfo { width: 104px; flex: none; padding: 7px 0 0 9px; border-right: 1px solid #a0a0a0; }
  .dinfo b { display: flex; align-items: center; height: 15px; gap: 2px; padding-left: 2px; }
  .dinfo b svg { position: relative; top: -3px; }
  .dparts { display: flex; width: 443px; flex: none; padding-top: 3px; }
  .part { height: 93px; flex: none; padding: 1px 1px 0 1px; }
  .frame { height: 90px; border-right: 1px solid #a0a0a0; border-bottom: 1px solid #a0a0a0; border-top: 1px solid #fff; }
  .part .bar { height: 13px; background: #000080; max-width: 100%; box-shadow: 0 1px #a0a0a0; }
  .body { height: 69px; margin: 3px 3px 0; background: #fff; border: 1px solid #999; border-right: 0; border-bottom: 0; padding: 2px 3px 3px; }
  .clip { overflow: hidden; white-space: nowrap; }
  .logical { border: solid #008000; border-width: 2px 4px 3px; padding: 0 1px; margin-top: -1px; }
  .logical .frame { height: 88px; }
  .logical .bar { background: #0000ff; }
  .cdrow { margin-top: 1px; width: 269px; }
  .cdrow .dparts { width: 165px; border-right: 1px solid #a0a0a0; }
  .legend { height: 20px; border-top: 1px solid #fff; background: #f0f0f0; display: flex; align-items: center; padding-left: 5px; white-space: nowrap; box-shadow: inset -1px 0 #aaa; }
  .sw { width: 11px; height: 14px; margin: 0 5px; flex: none; border: 1px solid #aaa; border-right-color: #fff; border-bottom-color: #fff; }
  .sw:first-child { margin-left: 0; margin-right: 6px; }
  .actions { width: 188px; margin-bottom: 1px; background: #fff; border: 2px solid #858585; border-right: 1px solid #ddd; border-bottom: 1px solid #ddd; }
  .actions h2 { margin: 0; height: 21px; font-size: inherit; line-height: 21px; padding-left: 4px; background: #f0f0f0; border-bottom: 1px solid #999; }
  .grp { margin-top: 1px; height: 25px; display: flex; align-items: center; justify-content: space-between; padding: 0 7px 0 6px; background: linear-gradient(#b9d1ea, #99b4d1); }
  .more { height: 23px; display: flex; align-items: center; justify-content: space-between; padding: 0 8px 0 30px; }
  footer { height: 23px; border-top: 1px solid #d7d7d7; flex: 1; display: flex; padding-left: 715px; }
  .mmc footer span { flex: none; width: 133px; border-left: 1px solid #ddd; }
  .shade { position: absolute; right: 0; top: 0; bottom: 0; width: 42px; background: linear-gradient(90deg, transparent, rgba(0,0,0,.07) 50%, rgba(0,0,0,.24)); }

  .exp { position: absolute; left: 938px; top: 0; width: 929px; height: 907px; background: #191919; border-bottom: 1px solid #717171; color: #fff; display: flex; flex-direction: column; }
  .etitle { height: 28px; background: #202020; display: flex; align-items: center; gap: 4px; padding: 0 10px 3px 8px; }
  .cmd { height: 54px; background: #202020; border-bottom: 1px solid #3b3b3b; display: flex; align-items: center; padding-left: 20px; }
  .cmd > div { display: flex; align-items: center; }
  .cmd .t { position: relative; top: 1px; font-weight: 500; }
  .cmd i { width: 1px; height: 32px; background: #373737; flex: none; }
  .new { width: 99px; color: #777; }
  .new .t { margin: 0 5px 0 9px; }
  .ops { width: 292px; padding-left: 18px; gap: 32px; }
  .sort { width: 138px; padding-left: 16px; }
  .sort .t, .view .t { margin: 0 5px 0 8px; }
  .view { width: 144px; padding-left: 16px; }
  .dots { margin-left: 16px; fill: #fff; }
  .addr { height: 54px; display: flex; padding: 10px 4px 10px 15px; align-items: center; }
  .nav4 { width: 122px; flex: none; display: flex; align-items: center; }
  .fwd { margin: 0 20px 0 23px; }
  .upd { margin-left: 19px; }
  .path { width: 434px; flex: none; height: 34px; border: 1px solid #535353; display: flex; align-items: center; padding-left: 8px; }
  .path > :global(svg:nth-child(2)) { margin: 0 9px 0 5px; }
  .path .t { margin-right: 8px; }
  .pend { margin-left: auto; display: flex; align-items: center; gap: 22px; padding-right: 11px; }
  .search { flex: 1; margin-left: 12px; height: 34px; border: 1px solid #535353; display: flex; align-items: center; padding-left: 14px; gap: 12px; color: #757575; }
  .ebody { height: 747px; display: flex; }
  .side { width: 157px; padding-top: 10px; overflow: hidden; }
  .side > div { height: 32px; display: flex; align-items: center; position: relative; }
  .side > .top { padding-left: 10px; gap: 0; }
  .top > :global(svg:first-child) { margin-right: 12px; }
  .top .t { margin-left: 6px; }
  .side > .q { padding-left: 38px; gap: 5px; }
  .q > :global(.pin) { margin-left: auto; margin-right: 4px; }
  .side > .p { height: 28px; margin: 12px 1px 0 2px; padding-left: 8px; overflow: hidden; border-radius: 2px; }
  .q + .p { margin-top: 10px !important; }
  .p > :global(svg:first-child) { margin-right: 11px; }
  .p > .t { margin-left: 5px; }
  .p > :global(svg:nth-child(2)) { width: 16px; }
  .cur { background: #333; }
  .content { flex: 1; border-left: 2px solid #2b2b2b; padding-left: 7px; overflow: hidden; }
  h3 { margin: 8px 0 0; height: 22px; display: flex; align-items: center; font: 400 15.5px/22px "Open Sans", "Noto Sans", sans-serif; gap: 4px; }
  h3 hr { flex: 1; height: 1px; border: 0; background: #333; margin: 0 0 0 3px; }
  .h2nd { margin-top: -8px; }
  .grid { display: grid; grid-template-columns: repeat(3, 254px); padding: 13px 0 0 15px; }
  .tile { height: 56px; display: flex; gap: 8px; }
  .tile .t { padding-top: 1px; }
  .devs { padding: 8px 0 0 14px; }
  .dev { display: flex; }
  .ic { width: 43px; margin-right: 8px; flex: none; }
  .dev:nth-child(2) .ic { margin-top: -2px; }
  .info { margin-top: -1px; }
  .info small { display: block; font-size: inherit; line-height: 15px; margin-top: 1px; color: #ddd; }
  .meter { width: 189px; height: 13px; margin: 1px 0 1px -1px; background: #e6e6e6; border: 1px solid #bcbcbc; }
  .meter span { display: block; height: 100%; background: #26a0da; }
  .estat { background: #1d1d1d; border: 0; padding: 0 3px 0 14px; align-items: center; }
  .estat i { width: 1px; height: 10px; background: #fff; margin-left: 9px; }
  .modes { margin-left: auto; margin-right: -4px; display: flex; gap: 6px; }

  .wm { position: absolute; left: 1350px; top: 817px; color: rgba(170,170,170,.62); white-space: nowrap; }
  .w1 { font-size: 19.500px; line-height: 28px; }
  .w2 { font-size: 14.500px; line-height: 18px; }
  .tip { position: absolute; left: 1687px; top: 838px; width: 190px; height: 50px; padding: 1px 5px; background: #c3c3c3; border: 1px solid #ddd; color: #505050; white-space: nowrap; box-shadow: 2px 3px 5px rgba(0,0,0,.6); }

  .taskbar { position: absolute; left: 0; top: 907px; width: 1867px; height: 44px; background: #202020; color: #fff; display: flex; justify-content: space-between; }
  .apps { display: flex; gap: 2px; padding-left: 785px; }
  .app { position: relative; width: 42px; height: 44px; padding-top: 6px; display: flex; align-items: center; justify-content: center; }
  .active::before { content: ""; position: absolute; inset: 4px 0 0; background: #2d2d2d; border: 1px solid #363636; border-radius: 4px; }
  .active svg { position: relative; }
  .app u { position: absolute; left: 13px; bottom: 1px; width: 16px; height: 3px; border-radius: 2px; background: #4cc2ff; }
  .app .dim { left: 18px; width: 6px; background: #9a9a9a; }
  .tray { display: flex; align-items: center; padding: 4px 11px 0 0; font-size: 11.700px; }
  .up { margin-right: 9px; }
  .cloud { margin-right: 14px; }
  .n { margin-left: 18px; }
  .v { margin-left: 7px; }
  .b { margin-left: 6px; margin-right: 17px; }
  .time { text-align: right; line-height: 16px; }
</style>
